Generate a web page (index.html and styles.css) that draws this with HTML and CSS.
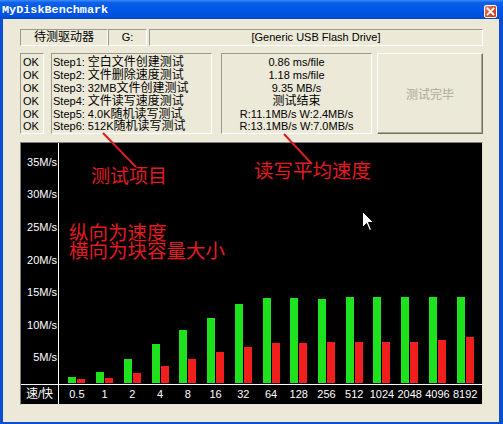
FILE: index.html
```html
<!DOCTYPE html>
<html lang="zh-CN">
<head>
<meta charset="utf-8">
<title>MyDiskBenchmark</title>
<link rel="stylesheet" href="styles.css">
</head>
<body>
<div class="window">
  <div class="titlebar">
    <span class="title">MyDiskBenchmark</span>
    <span class="close">
      <svg width="13" height="13" viewBox="0 0 13 13"><path d="M3.5 3.5 L9.5 9.5 M9.5 3.5 L3.5 9.5" stroke="#fff" stroke-width="1.8" stroke-linecap="square"/></svg>
    </span>
  </div>
  <div class="client">
    <div class="row1">
      <div class="sunk drive-label"><span class="cjk">待测驱动器</span></div>
      <div class="sunk drive-letter">G:</div>
      <div class="sunk drive-name">[Generic USB Flash Drive]</div>
    </div>
    <div class="row2">
      <div class="sunk status">
        <div class="line">OK</div>
        <div class="line">OK</div>
        <div class="line">OK</div>
        <div class="line">OK</div>
        <div class="line">OK</div>
        <div class="line">OK</div>
      </div>
      <div class="sunk steps">
        <div class="line">Step1: <span class="cjk">空白文件创建测试</span></div>
        <div class="line">Step2: <span class="cjk">文件删除速度测试</span></div>
        <div class="line">Step3: 32MB<span class="cjk">文件创建测试</span></div>
        <div class="line">Step4: <span class="cjk">文件读写速度测试</span></div>
        <div class="line">Step5: 4.0K<span class="cjk">随机读写测试</span></div>
        <div class="line">Step6: 512K<span class="cjk">随机读写测试</span></div>
      </div>
      <div class="sunk values">
        <div class="line">0.86 ms/file</div>
        <div class="line">1.18 ms/file</div>
        <div class="line">9.35 MB/s</div>
        <div class="line"><span class="cjk">测试结束</span></div>
        <div class="line">R:11.1MB/s W:2.4MB/s</div>
        <div class="line">R:13.1MB/s W:7.0MB/s</div>
      </div>
      <button class="btn" disabled>测试完毕</button>
    </div>
    <div class="chart">
      <div class="yaxis">
        <div class="yl">35M/s</div>
        <div class="yl">30M/s</div>
        <div class="yl">25M/s</div>
        <div class="yl">20M/s</div>
        <div class="yl">15M/s</div>
        <div class="yl">10M/s</div>
        <div class="yl">5M/s</div>
      </div>
      <div class="plot">
        <div class="col"><i class="bar g" style="height:6px"></i><i class="bar r" style="height:4px"></i></div>
        <div class="col"><i class="bar g" style="height:11px"></i><i class="bar r" style="height:5px"></i></div>
        <div class="col"><i class="bar g" style="height:24px"></i><i class="bar r" style="height:10px"></i></div>
        <div class="col"><i class="bar g" style="height:39px"></i><i class="bar r" style="height:17px"></i></div>
        <div class="col"><i class="bar g" style="height:53px"></i><i class="bar r" style="height:24px"></i></div>
        <div class="col"><i class="bar g" style="height:65px"></i><i class="bar r" style="height:31px"></i></div>
        <div class="col"><i class="bar g" style="height:79px"></i><i class="bar r" style="height:36px"></i></div>
        <div class="col"><i class="bar g" style="height:85px"></i><i class="bar r" style="height:40px"></i></div>
        <div class="col"><i class="bar g" style="height:85px"></i><i class="bar r" style="height:40px"></i></div>
        <div class="col"><i class="bar g" style="height:84px"></i><i class="bar r" style="height:41px"></i></div>
        <div class="col"><i class="bar g" style="height:86px"></i><i class="bar r" style="height:41px"></i></div>
        <div class="col"><i class="bar g" style="height:86px"></i><i class="bar r" style="height:41px"></i></div>
        <div class="col"><i class="bar g" style="height:86px"></i><i class="bar r" style="height:41px"></i></div>
        <div class="col"><i class="bar g" style="height:86px"></i><i class="bar r" style="height:43px"></i></div>
        <div class="col"><i class="bar g" style="height:86px"></i><i class="bar r" style="height:46px"></i></div>
      </div>
      <div class="corner"><span class="cjk">速</span>/<span class="cjk">快</span></div>
      <div class="xlabels">
        <span class="xl">0.5</span><span class="xl">1</span><span class="xl">2</span><span class="xl">4</span><span class="xl">8</span><span class="xl">16</span><span class="xl">32</span><span class="xl">64</span><span class="xl">128</span><span class="xl">256</span><span class="xl">512</span><span class="xl">1024</span><span class="xl">2048</span><span class="xl">4096</span><span class="xl">8192</span>
      </div>
    </div>
  </div>
</div>

<div class="notes">
  <svg class="note-lines" width="503" height="424" viewBox="0 0 503 424">
    <line x1="103" y1="133" x2="136" y2="167" stroke="#d81c22" stroke-width="2"/>
    <line x1="284" y1="134" x2="312" y2="164" stroke="#d81c22" stroke-width="2"/>
  </svg>
  <span class="note note-items">测试项目</span>
  <span class="note note-speed">读写平均速度</span>
  <div class="note note-axis">纵向为速度<br>横向为块容量大小</div>
  <svg class="cursor" width="13" height="21" viewBox="0 0 13 21"><path d="M0.5 0.5 L0.5 16.5 L4.5 12.5 L7.5 19.5 L9.5 18.5 L6.5 11.5 L11.5 11.5 Z" fill="#fff" stroke="#000" stroke-width="1"/></svg>
</div>
</body>
</html>
```

FILE: styles.css
```css
* { box-sizing: border-box; }

body {
  margin: 0;
  position: relative;
  width: 503px;
  height: 424px;
  overflow: hidden;
  font-family: "Liberation Sans", "Noto Sans CJK SC", sans-serif;
  font-size: 11px;
  color: #000;
  background: #0c4fd8;
}

.cjk {
  font-family: "Noto Sans CJK SC", sans-serif;
  font-size: 12px;
  line-height: 10px;
}

.window {
  width: 503px;
  height: 424px;
  display: flex;
  flex-direction: column;
  background: #0b4ed6;
}

.titlebar {
  height: 19px;
  flex: none;
  display: flex;
  align-items: flex-start;
  background: linear-gradient(#3d8cf8 0%, #0b60ea 14%, #0056e6 50%, #0051dd 85%, #0046cc 100%);
  padding-left: 2px;
}

.title {
  font-family: "Liberation Mono", monospace;
  font-weight: bold;
  font-size: 11.8px;
  line-height: 19px;
  padding-top: 1px;
  color: #fff;
}

.close {
  margin-left: auto;
  margin-right: 6px;
  margin-top: 5px;
  width: 13px;
  height: 13px;
  border: 1px solid #fff;
  border-radius: 2px;
  background: linear-gradient(135deg, #ee8c6c 0%, #d9532f 45%, #c23a1a 100%);
  display: flex;
}

.close svg { display: block; margin: -1px; }

.client {
  flex: 1;
  margin: 0 4px 2px 3px;
  background: #ece9d8;
  padding: 10px 16px 0 17px;
  display: flex;
  flex-direction: column;
}

.sunk {
  border: 1px solid;
  border-color: #9d9a8c #fff #fff #9d9a8c;
}

.row1 {
  display: flex;
  height: 17px;
}

.row1 .sunk {
  text-align: center;
  line-height: 15px;
  white-space: nowrap;
}

.drive-label { width: 88px; }
.drive-letter { width: 39px; }
.drive-name { flex: 1; margin-left: 2px; }

.row2 {
  display: flex;
  height: 81px;
  margin-top: 7px;
}

.status, .steps, .values {
  padding-top: 2px;
  white-space: nowrap;
}

.line {
  height: 12.9px;
  line-height: 12.9px;
}

.status { width: 24px; padding-left: 2px; }
.steps { width: 161px; margin-left: 7px; padding-left: 1px; }
.values { width: 151px; margin-left: 9px; text-align: center; }

.btn {
  width: 106px;
  margin-left: auto;
  background: #ece9d8;
  border: 1px solid;
  border-color: #fff #716f64 #716f64 #fff;
  box-shadow: inset -1px -1px 0 #aca899;
  font-family: "Noto Sans CJK SC", sans-serif;
  font-size: 12px;
  color: #aca899;
  padding: 0;
}

.chart {
  height: 263px;
  margin-top: 8px;
  background: #000;
  border: 1px solid;
  border-color: #808080 #e6e3d6 #e6e3d6 #808080;
  display: grid;
  grid-template-columns: 38px 1fr;
  grid-template-rows: 1fr 19px;
  color: #fff;
}

.yaxis {
  border-right: 1px solid #fff;
  border-bottom: 1px solid #fff;
  display: flex;
  flex-direction: column;
  justify-content: flex-end;
}

.yl {
  height: 32.6px;
  flex: none;
  text-align: right;
  padding-right: 1px;
  line-height: 13px;
}

.plot {
  border-bottom: 1px solid #fff;
  display: flex;
  padding: 0 3px 1px 4px;
}

.col {
  flex: 1;
  display: flex;
  justify-content: center;
  align-items: flex-end;
  gap: 1px;
}

.bar { display: block; width: 8px; }
.g { background: #1fe21f; }
.r { background: #f21d1d; }

.corner {
  border-right: 1px solid #fff;
  text-align: center;
  line-height: 19px;
}

.xlabels {
  display: flex;
  padding: 0 3px 0 4px;
}

.xl {
  flex: 1;
  text-align: center;
  line-height: 19px;
  white-space: nowrap;
}

.notes {
  position: absolute;
  left: 0;
  top: 0;
  width: 503px;
  height: 424px;
  pointer-events: none;
}

.note-lines { position: absolute; left: 0; top: 0; }

.note {
  position: absolute;
  font-family: "Noto Sans CJK SC", sans-serif;
  font-size: 19.5px;
  line-height: 1;
  color: #e01b22;
  white-space: nowrap;
}

.note-items { left: 91px; top: 165px; font-size: 19px; }
.note-speed { left: 254px; top: 160px; }
.note-axis { left: 69px; top: 223px; line-height: 18px; }

.cursor { position: absolute; left: 362px; top: 211px; }
```
